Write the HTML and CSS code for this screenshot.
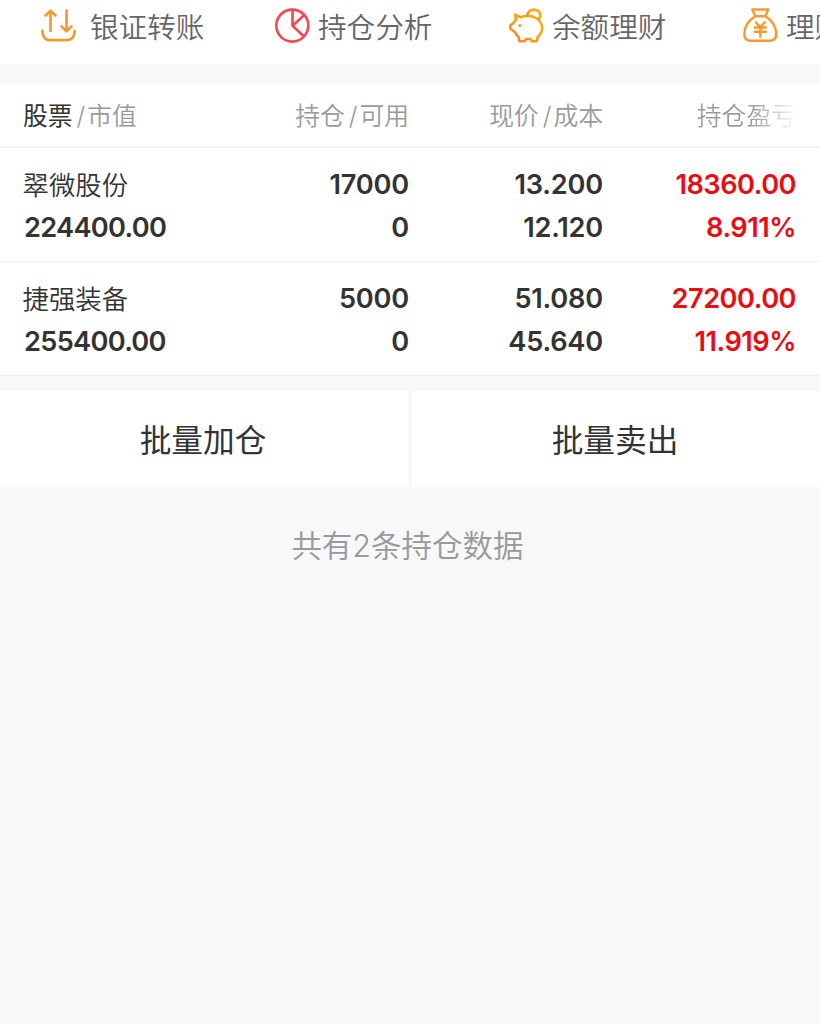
FILE: index.html
```html
<!DOCTYPE html>
<html lang="zh-CN">
<head>
  <meta charset="UTF-8" />
  <meta name="viewport" content="width=device-width, initial-scale=1.0">
  <title>持仓</title>
  <link rel="stylesheet" href="styles.css">
</head>
<body>
  <nav class="tools">
    <a class="tool transfer">
      <svg viewBox="0 0 36 36" fill="none" stroke="#f29a33" stroke-width="2.7" stroke-linecap="round" stroke-linejoin="round">
        <path d="M9.5 23V3M4.5 7.5L9.5 2.6L14.5 7.5M25.5 2.5V23M20.5 18.4L25.5 23.3L30.5 18.4" />
        <path d="M1.3 22.8C1.4 28.5 4.2 32.2 9.5 32.2H25.5C30.8 32.2 33.6 28.5 33.7 22.8" />
      </svg>
      <span>银证转账</span>
    </a>
    <a class="tool">
      <svg viewBox="0 0 36 36" fill="none" stroke="#f5484f" stroke-width="2.6" stroke-linecap="round" stroke-linejoin="round">
        <circle cx="17.3" cy="17.6" r="16" />
        <path d="M17.5 2V17.8L28.5 28M17.5 17.8L29 7.2" />
      </svg>
      <span>持仓分析</span>
    </a>
    <a class="tool">
      <svg viewBox="0 0 36 36" fill="none" stroke="url(#gold)" stroke-width="2.6" stroke-linecap="round" stroke-linejoin="round">
        <defs>
          <linearGradient id="gold" x1="0" y1="1" x2="1" y2="0">
            <stop offset="0" stop-color="#f5852a" />
            <stop offset="1" stop-color="#fbb80c" />
          </linearGradient>
        </defs>
        <path d="M6 6.8L11.8 9.3C16 7.2 23 7.2 27.7 10.5C34.8 15.5 34.8 24 28.8 28.7L27.8 33.2H22.8L21.8 31H16.8L15.8 33.2H10.5L9.5 28.7C7.8 27.5 6.8 26 6 24.2L1.4 20.8V17.2L4.4 15L7.2 11.5Z" />
        <path d="M18.2 7.2C19.2 3.5 21.5 1.6 24.7 1.6C30.3 1.6 33.3 6.5 29.7 11" />
        <circle cx="10.8" cy="17.5" r="1.6" fill="#f7972a" stroke="none" />
      </svg>
      <span>余额理财</span>
    </a>
    <a class="tool">
      <svg viewBox="0 0 36 36" fill="none" stroke="#f79a2e" stroke-width="2.4" stroke-linecap="round" stroke-linejoin="round">
        <path d="M12.3 8.3L9.3 1.5H25.2L22.2 8.3Z" />
        <path d="M12.3 8.3C5.5 12 1.3 19 1.3 26C1.3 31 3.5 32.8 8 32.8H26.5C31 32.8 33.3 31 33.3 26C33.3 19 29 12 22.2 8.3" />
        <path d="M13 14.5L17.3 19.3L21.6 14.5M11.8 19.5H22.8M11.8 23.8H22.8M17.3 19.3V28.5" />
      </svg>
      <span>理财</span>
    </a>
  </nav>

  <main>
    <section class="holdings">
      <div class="row head">
        <div class="name"><b>股票</b><i>/</i>市值</div>
        <div>持仓<i>/</i>可用</div>
        <div>现价<i>/</i>成本</div>
        <div class="fade">持仓盈亏</div>
      </div>
      <div class="row">
        <div class="name"><span class="stock">翠微股份</span><span>224400.00</span></div>
        <div><span>17000</span><span>0</span></div>
        <div><span>13.200</span><span>12.120</span></div>
        <div class="up"><span>18360.00</span><span>8.911%</span></div>
      </div>
      <div class="row">
        <div class="name"><span class="stock">捷强装备</span><span>255400.00</span></div>
        <div><span>5000</span><span>0</span></div>
        <div><span>51.080</span><span>45.640</span></div>
        <div class="up"><span>27200.00</span><span>11.919%</span></div>
      </div>
    </section>

    <div class="actions">
      <button>批量加仓</button>
      <button>批量卖出</button>
    </div>

    <p class="total">共有2条持仓数据</p>
  </main>
</body>
</html>
```
FILE: styles.css
```css
* {
  box-sizing: border-box;
}
body {
  margin: 0;
  min-height: 1024px;
  overflow: hidden;
  background-color: #f6f8fa;
  color: #333;
  font-family: Inter, "Noto Sans CJK SC", sans-serif;
}

/* Shortcut bar */
.tools {
  display: flex;
  height: 64px;
  padding-left: 41px;
  overflow: hidden;
  background-color: #fff;
}
.tool {
  display: flex;
  flex: 0 0 234px;
  align-items: center;
  gap: 7px;
  height: 52px;
  color: #666;
  font-size: 28.6px;
  font-weight: 350;
  line-height: 50px;
  white-space: nowrap;
}
.tool span {
  padding-top: 3px;
}
.tool svg {
  flex: none;
  width: 36px;
  height: 36px;
}
.transfer {
  gap: 13px;
}

/* Holdings table */
.holdings {
  margin-top: 19px;
  background-color: #fff;
}
.row {
  display: grid;
  grid-template-columns: 208px 177px 194px 193px;
  height: 114px;
  padding: 15px 24px 0;
  border-bottom: 1px solid #f0f0f2;
  font-size: 27.2px;
  font-weight: 600;
  letter-spacing: -0.2px;
  line-height: 43px;
  text-align: right;
}
.row span {
  display: block;
}
.row .name {
  letter-spacing: -0.7px;
  text-align: left;
}
.row .stock {
  height: 43px;
  margin-left: -1.5px;
  padding-top: 1px;
  font-size: 26.4px;
  font-weight: 350;
  letter-spacing: 0;
}
.row .up {
  color: #e90c12;
  letter-spacing: -0.5px;
}
.head,
.head .name {
  letter-spacing: 0;
}
.head {
  height: 65px;
  padding-top: 0;
  border-bottom: 2px solid #f3f3f4;
  color: #999;
  font-size: 24.8px;
  font-weight: 350;
  line-height: 66px;
}
.head .name {
  margin-left: -1px;
}
.head b {
  color: #333;
  font-weight: 400;
}
.head i {
  margin: 0 2px 0 4px;
  font-style: normal;
}
.fade {
  background: linear-gradient(90deg, #999 76%, #fff 101%);
  -webkit-background-clip: text;
  background-clip: text;
  color: transparent;
}

/* Bottom buttons */
.actions {
  display: flex;
  gap: 4px;
  margin-top: 15px;
}
.actions button {
  flex: 1;
  height: 96px;
  padding: 4px 2px 0 0;
  border: none;
  background-color: #fff;
  color: #333;
  font-family: inherit;
  font-size: 31.7px;
  line-height: 92px;
}
.total {
  margin: 36px 0 0;
  padding-right: 5px;
  color: #999;
  font-size: 30.5px;
  font-weight: 350;
  line-height: 46px;
  text-align: center;
}
```
